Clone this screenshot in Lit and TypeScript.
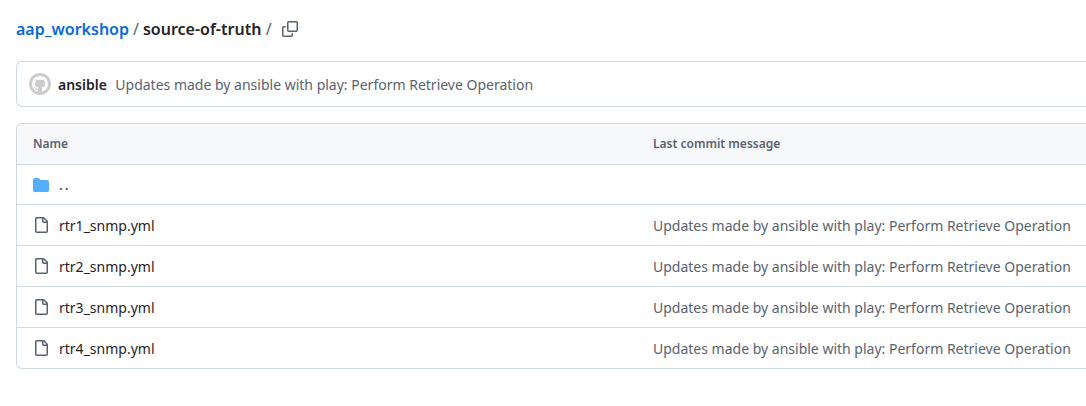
import { LitElement, html, css, svg } from "lit";
import { customElement } from "lit/decorators.js";

const FILES = ["rtr1_snmp.yml", "rtr2_snmp.yml", "rtr3_snmp.yml", "rtr4_snmp.yml"];
const MESSAGE = "Updates made by ansible with play: Perform Retrieve Operation";

const icon = (name: string, paths: string[]) => html`<svg class="icon ${name}" viewBox="0 0 16 16" width="16" height="16" aria-hidden="true">
  ${paths.map((d) => svg`<path d=${d}></path>`)}
</svg>`;

const COPY = [
  "M0 6.75C0 5.784.784 5 1.75 5h1.5a.75.75 0 0 1 0 1.5h-1.5a.25.25 0 0 0-.25.25v7.5c0 .138.112.25.25.25h7.5a.25.25 0 0 0 .25-.25v-1.5a.75.75 0 0 1 1.5 0v1.5A1.75 1.75 0 0 1 9.25 16h-7.5A1.75 1.75 0 0 1 0 14.25Z",
  "M5 1.75C5 .784 5.784 0 6.75 0h7.5C15.216 0 16 .784 16 1.75v7.5A1.75 1.75 0 0 1 14.25 11h-7.5A1.75 1.75 0 0 1 5 9.25Zm1.75-.25a.25.25 0 0 0-.25.25v7.5c0 .138.112.25.25.25h7.5a.25.25 0 0 0 .25-.25v-7.5a.25.25 0 0 0-.25-.25Z",
];
const FOLDER = [
  "M1.75 1A1.75 1.75 0 0 0 0 2.75v10.5C0 14.216.784 15 1.75 15h12.5A1.75 1.75 0 0 0 16 13.25v-8.5A1.75 1.75 0 0 0 14.25 3H7.5a.25.25 0 0 1-.2-.1l-.9-1.2C6.07 1.26 5.55 1 5 1H1.75Z",
];
const FILE = [
  "M2 1.75C2 .784 2.784 0 3.75 0h6.586c.464 0 .909.184 1.237.513l2.914 2.914c.329.328.513.773.513 1.237v9.586A1.75 1.75 0 0 1 13.25 16h-9.5A1.75 1.75 0 0 1 2 14.25Zm1.75-.25a.25.25 0 0 0-.25.25v12.5c0 .138.112.25.25.25h9.5a.25.25 0 0 0 .25-.25V6h-2.75A1.75 1.75 0 0 1 9 4.25V1.5Zm6.75.062V4.25c0 .138.112.25.25.25h2.688l-.011-.013-2.914-2.914-.013-.011Z",
];
const MARK = [
  "M8 0C3.58 0 0 3.58 0 8c0 3.54 2.29 6.53 5.47 7.59.4.07.55-.17.55-.38 0-.19-.01-.82-.01-1.49-2.01.37-2.53-.49-2.69-.94-.09-.23-.48-.94-.82-1.13-.28-.15-.68-.52-.01-.53.63-.01 1.08.58 1.23.82.72 1.21 1.87.87 2.33.66.07-.52.28-.87.51-1.07-1.78-.2-3.64-.89-3.64-3.95 0-.87.31-1.59.82-2.15-.08-.2-.36-1.02.08-2.12 0 0 .67-.21 2.2.82.64-.18 1.32-.27 2-.27s1.36.09 2 .27c1.53-1.04 2.2-.82 2.2-.82.44 1.1.16 1.92.08 2.12.51.56.82 1.27.82 2.15 0 3.07-1.87 3.75-3.65 3.95.29.25.54.73.54 1.48 0 1.07-.01 1.93-.01 2.2 0 .21.15.46.55.38A8.01 8.01 0 0 0 16 8c0-4.42-3.58-8-8-8Z",
];

@customElement("app-root")
export class AppRoot extends LitElement {
  static styles = css`
    :host { display: block; height: 406px; overflow: hidden; background: #fff; color: #1f2328;
      font: 14px/21px "Noto Sans", sans-serif; }
    * { box-sizing: border-box; }
    .page { padding: 14px 0 0 16px; }
    .icon { display: block; flex: none; fill: #59636e; }
    .crumbs { display: flex; align-items: center; height: 30px; font-size: 16px; line-height: 24px; white-space: pre; }
    .repo { color: #0969da; font-weight: 600; }
    .here { font-weight: 600; }
    .sep { color: #59636e; padding: 0 4px; }
    .here + .sep { padding: 0 3.5px 0 4.5px; }
    .copy { margin-left: 7px; }
    .panel { border: 1px solid #d1d9e0; border-right: 0; border-radius: 6px 0 0 6px; white-space: nowrap; }
    .commit { display: flex; align-items: center; height: 46px; margin-top: 17px; padding-left: 12px; }
    .avatar { display: grid; place-items: center; width: 22px; height: 22px; border-radius: 50%; background: #ccc; }
    .mark { fill: #fff; }
    .author { margin: 0 8.4px 0 7px; font-weight: 600; }
    .message { color: #59636e; }
    .files { margin-top: 16px; }
    .row { display: grid; grid-template-columns: 620px 1fr; align-items: center; height: 41px; padding-left: 16px; border-top: 1px solid #d1d9e0; }
    .head { border-top: 0; border-top-left-radius: 5px; height: 40px; background: #f6f8fa; color: #59636e; font-size: 12px; font-weight: 600; line-height: 18px; }
    .parent { height: 40px; }
    .name { display: flex; align-items: center; gap: 10px; }
    .folder { fill: #54aeff; }
    .dots { color: #59636e; font-weight: 600; letter-spacing: 2px; }
  `;

  render() {
    return html`<main class="page">
      <nav class="crumbs"><span class="repo">aap_workshop</span><span class="sep">/</span><span class="here">source-of-truth</span><span class="sep">/</span>${icon("copy", COPY)}</nav>
      <section class="panel commit">
        <span class="avatar">${icon("mark", MARK)}</span>
        <span class="author">ansible</span><span class="message">${MESSAGE}</span>
      </section>
      <section class="panel files">
        <div class="row head"><span>Name</span><span>Last commit message</span></div>
        <div class="row parent"><span class="name">${icon("folder", FOLDER)}<span class="dots">..</span></span></div>
        ${FILES.map((f) => html`<div class="row"><span class="name">${icon("file", FILE)}<span>${f}</span></span><span class="message">${MESSAGE}</span></div>`)}
      </section>
    </main>`;
  }
}
